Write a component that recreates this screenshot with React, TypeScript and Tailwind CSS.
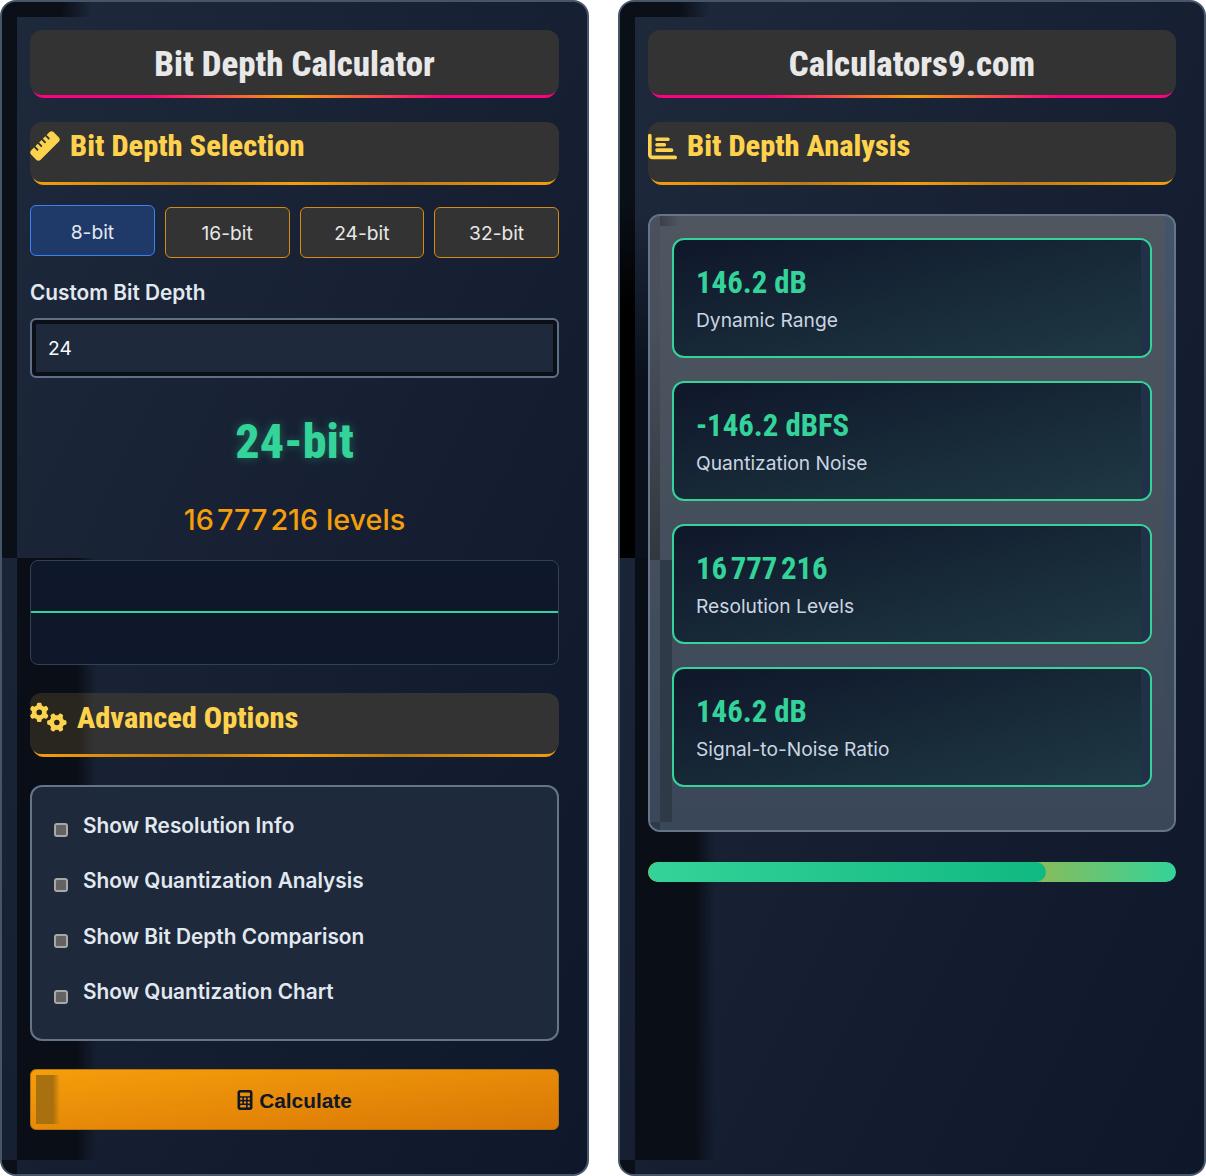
import React from "react";
import { FaRuler, FaChartBar, FaGears, FaCalculator } from "react-icons/fa6";

const cond = "font-['Roboto',sans-serif] [font-stretch:75%]";

function Panel({ children, dark, wide }: { children: React.ReactNode; dark?: boolean; wide?: boolean }) {
  return (
    <div className={`relative ${wide ? "w-[589px]" : "w-[588px]"} h-[1176px] rounded-2xl border-2 border-[#475569] bg-gradient-to-br from-[#1e293b] to-[#0f172a] overflow-hidden p-[28px]`}>
      <div className={`absolute left-0 top-0 w-[15px] h-[556px] ${dark ? "bg-[linear-gradient(180deg,#0b1018_35%,#000000_55%)]" : "bg-[#0b1018]"}`} />
      {dark && <div className="absolute left-[15px] top-[210px] w-[15px] h-[346px] bg-[linear-gradient(180deg,transparent_0%,#0a101c_50%)]" />}
      <div className="absolute left-[15px] top-0 w-[75px] h-[15px] bg-gradient-to-r from-[#0b1018] from-60% to-transparent" />
      <div className="absolute left-[15px] top-[556px] w-[80px] h-[602px] bg-gradient-to-r from-[#0a0e16] from-75% to-transparent" />
      <div className="absolute left-0 top-[1158px] w-[15px] h-[16px] bg-[#0b1018]" />
      <div className="relative flex flex-col">{children}</div>
    </div>
  );
}

function Title({ children }: { children: React.ReactNode }) {
  return (
    <div className="relative h-[68px]">
      <div className="absolute left-[2px] right-[2px] bottom-0 h-[16px] rounded-b-xl bg-[linear-gradient(90deg,#ff0080_0%,#ff0080_22%,#f59e0b_50%,#ff0080_78%,#ff0080_100%)]" />
      <div className="absolute inset-x-0 top-0 bottom-[3px] rounded-xl bg-[#333333]" />
      <h1 className={`relative ${cond} font-extrabold text-[34.9px] leading-[40px] pt-[15px] text-center text-[#e8e8e8]`}>{children}</h1>
    </div>
  );
}

function Section({ icon, children, shade }: { icon: React.ReactNode; children: React.ReactNode; shade?: boolean }) {
  return (
    <div className={`relative ${shade ? "h-[64px]" : "h-[63px]"}`}>
      <div className="absolute left-[2px] right-[2px] bottom-0 h-[16px] rounded-b-xl bg-[linear-gradient(90deg,#f59e0b_0%,#bd7c13_30%,#f59e0b_50%,#bd7c13_70%,#f59e0b_100%)]" />
      <div className="absolute inset-x-0 top-0 bottom-[3px] rounded-xl bg-[#333333]" />
      {shade && <div className="absolute left-0 top-0 bottom-[3px] w-[64px] rounded-l-xl bg-[linear-gradient(90deg,#29251f_75%,#333333_100%)]" />}
      <div className={`relative flex items-start gap-[10px] ${shade ? "pt-[8px]" : "pt-[7px]"}`}>
        <span className={`text-[#fcd34d] h-[34px] flex items-center ${shade ? "-mt-[1px]" : ""}`}>{icon}</span>
        <h2 className={`${cond} font-extrabold text-[30.4px] leading-[34px] text-[#ffd24d]`}>{children}</h2>
      </div>
    </div>
  );
}

function BitButton({ label, active }: { label: string; active?: boolean }) {
  return (
    <button
      className={`w-[125px] h-[51px] rounded-md border text-[19.2px] ${
        active
          ? "border-[#3b82f6] bg-[#1f3a68] text-[#e2e8f0] -mt-[2px] pt-[3px]"
          : "border-[#d98a12] bg-[#333333] text-[#e8e8e8] pt-[2px]"
      }`}
    >
      {label}
    </button>
  );
}

function Check({ label }: { label: string }) {
  return (
    <label className="flex items-center h-[55.6px] pl-[22px]">
      <span className="w-[14px] h-[14px] mt-[8px] mr-[15px] rounded-[3px] border-2 border-[#a8a8a8] bg-[#636363] shrink-0" />
      <span className="text-[20.8px] font-semibold text-[#e2e8f0] -mt-[1px]">{label}</span>
    </label>
  );
}

function Result({ value, label }: { value: string; label: string }) {
  return (
    <div className="relative h-[120px] rounded-xl border-2 border-[#34d399] bg-gradient-to-br from-[#0f172a] to-[#1f3a44] overflow-hidden pl-[22px] pt-[24px]">
      <div className="absolute right-0 top-0 bottom-0 w-[9px] bg-[#22314a]" />
      <div className={`relative ${cond} font-bold text-[30.8px] leading-[38px] text-[#34d399]`}>{value}</div>
      <div className="relative mt-[6px] text-[19.2px] leading-[24px] text-[#cbd5e1]">{label}</div>
    </div>
  );
}

export default function App() {
  return (
    <div className="w-[1206px] h-[1176px] bg-white flex justify-between font-['Inter',sans-serif]">
      <Panel wide>
        <Title>Bit Depth Calculator</Title>
        <div className="mt-[24px]">
          <Section icon={<FaRuler className="w-[30px] h-[30px]" />}>Bit Depth Selection</Section>
        </div>
        <div className="mt-[22px] flex gap-[10px] items-start">
          <BitButton label="8-bit" active />
          <BitButton label="16-bit" />
          <BitButton label="24-bit" />
          <BitButton label="32-bit" />
        </div>
        <label className="mt-[23px] text-[20.8px] leading-[24px] font-semibold text-[#e2e8f0]">Custom Bit Depth</label>
        <div className="mt-[13px] h-[60px] rounded-md border-2 border-[#5f6f86] bg-[#1e293b] shadow-[inset_0_0_0_4px_#0b1018] flex items-center pl-[16px] text-[19.2px] text-[#f8fafc]">
          24
        </div>
        <div className={`mt-[35px] text-center ${cond} font-extrabold text-[48px] leading-[58px] text-[#34d399] [text-shadow:0_0_10px_rgba(52,211,153,0.35)]`}>
          24-bit
        </div>
        <div className="mt-[32px] text-center text-[28.8px] leading-[34px] font-medium text-[#f59e0b]">
          16<span className="tracking-[-2px]">&#8239;</span>777<span className="tracking-[-2px]">&#8239;</span>216 levels
        </div>
        <div className="mt-[23px] h-[105px] rounded-lg border border-[#334155] bg-[#0f172a] flex items-center">
          <div className="h-[2px] w-full bg-[#34d399] -mt-[2px]" />
        </div>
        <div className="mt-[28px]">
          <Section shade icon={<FaGears className="w-[37px] h-[30px]" />}>Advanced Options</Section>
        </div>
        <div className="mt-[28px] h-[256px] rounded-xl border-2 border-[#64748b] bg-[#1e293b] pt-[11px]">
          <Check label="Show Resolution Info" />
          <Check label="Show Quantization Analysis" />
          <Check label="Show Bit Depth Comparison" />
          <Check label="Show Quantization Chart" />
        </div>
        <button className="relative mt-[28px] h-[61px] rounded-md border border-[#b3730f] bg-gradient-to-br from-[#f59e0b] to-[#d97706] flex items-center justify-center gap-[6px] pt-[3px] text-[20.8px] font-bold text-[#0f172a] font-['Liberation_Sans',sans-serif] overflow-hidden">
          <span className="absolute left-[5px] top-[5px] bottom-[5px] w-[24px] bg-gradient-to-r from-[#a9700f] from-70% to-transparent" />
          <FaCalculator className="w-[16px] h-[20px] -mt-[2px]" />
          Calculate
        </button>
      </Panel>
      <Panel dark>
        <Title>Calculators9.com</Title>
        <div className="mt-[24px]">
          <Section icon={<FaChartBar className="w-[29px] h-[29px]" />}>Bit Depth Analysis</Section>
        </div>
        <div className="relative mt-[29px] h-[618px] rounded-xl border-2 border-[#64748b] bg-gradient-to-b from-[#50565f] to-[#3a4759] overflow-hidden p-[22px] flex flex-col gap-[23px]">
          <div className="absolute left-0 top-0 w-[10px] h-[344px] bg-[linear-gradient(180deg,#4a515c_0%,#4a515c_30%,#33383f_100%)]" />
          <div className="absolute left-[10px] top-0 w-[20px] h-[10px] bg-gradient-to-r from-[#3a3f48] to-transparent" />
          <div className="absolute left-[10px] top-[344px] w-[12px] h-[262px] bg-[#2f3a48]" />
          <div className="absolute left-0 top-[606px] w-[10px] h-[10px] bg-[#2f3a48]" />
          <div className="absolute right-0 top-0 bottom-0 w-[9px] bg-gradient-to-b from-[#44546a] to-[#3a4759]" />
          <Result value="146.2 dB" label="Dynamic Range" />
          <Result value="-146.2 dBFS" label="Quantization Noise" />
          <Result value="16&#8239;777&#8239;216" label="Resolution Levels" />
          <Result value="146.2 dB" label="Signal-to-Noise Ratio" />
        </div>
        <div className="relative mt-[30px] h-[20px] rounded-[10px] bg-[linear-gradient(90deg,#f59e0b_40%,#34d399_100%)] overflow-hidden">
          <div className="w-[398px] h-full rounded-[10px] bg-[linear-gradient(90deg,#34d399,#10b981)]" />
        </div>
      </Panel>
    </div>
  );
}
